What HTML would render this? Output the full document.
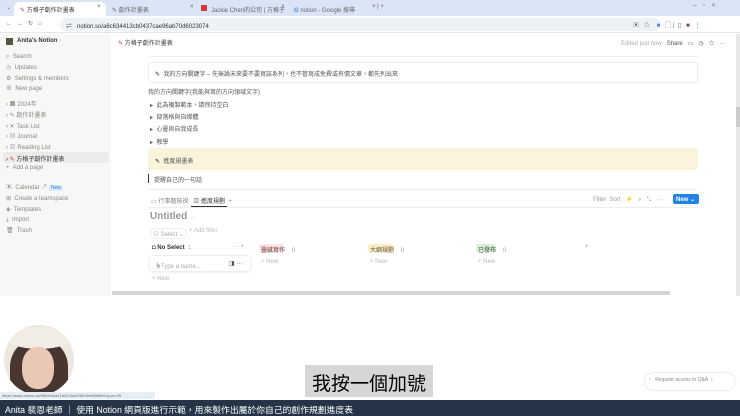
<!DOCTYPE html>
<html><head><meta charset="utf-8"><style>
*{margin:0;padding:0;box-sizing:border-box}
body{width:740px;height:416px;overflow:hidden;background:#fff;font-family:"Liberation Sans","Noto Sans CJK TC",sans-serif;position:relative;color:#37352f}
.a{position:absolute;white-space:nowrap}
.s{font-size:6px;color:#666}
.g{color:#9b9a97}
</style></head><body>
<!-- tab bar -->
<div class="a" style="left:0;top:0;width:740px;height:16px;background:#dae4f5"></div>
<div class="a s" style="left:6px;top:4px">⌄</div>
<div class="a" style="left:14px;top:2px;width:92px;height:14px;background:#fff;border-radius:5px 5px 0 0"></div>
<div class="a s" style="left:20px;top:5px;color:#333"><span style="color:#c33">✎</span> 方格子創作計畫表</div>
<div class="a s" style="left:97px;top:4px">×</div>
<div class="a s" style="left:112px;top:5px">✎ 創作計畫表</div>
<div class="a s" style="left:190px;top:4px">×</div>
<div class="a" style="left:201px;top:5px;width:6px;height:6px;background:#d33;border-radius:1px"></div>
<div class="a s" style="left:211px;top:5px">Jackie Chen的公司 | 方格子</div>
<div class="a s" style="left:281px;top:4px">×</div>
<div class="a s" style="left:294px;top:5px"><b style="color:#4285f4">G</b> notion - Google 搜尋</div>
<div class="a s" style="left:372px;top:4px">× | +</div>
<div class="a s" style="left:693px;top:3px">–&nbsp;&nbsp;&nbsp;&nbsp;▫&nbsp;&nbsp;&nbsp;&nbsp;×</div>
<!-- address bar -->
<div class="a" style="left:0;top:16px;width:740px;height:17px;background:#fff;border-bottom:1px solid #e5e5e5"></div>
<div class="a s" style="left:6px;top:20px">←&nbsp;&nbsp;&nbsp;→&nbsp;&nbsp;&nbsp;↻&nbsp;&nbsp;&nbsp;⌂</div>
<div class="a" style="left:60px;top:18px;width:600px;height:13px;background:#eef1f6;border-radius:7px"></div>
<div class="a s" style="left:66px;top:21px;color:#333">⇌&nbsp;&nbsp; notion.so/a6c634413cb0437cae96ab70d6023074</div>
<div class="a s" style="left:633px;top:20px">▣&nbsp;&nbsp;&nbsp;☆&nbsp;&nbsp;&nbsp;&nbsp;<span style="color:#4285f4">■</span>&nbsp;&nbsp;&nbsp;▢&nbsp;|&nbsp;&nbsp;▯&nbsp;&nbsp;&nbsp;<span style="color:#744">■</span>&nbsp;&nbsp;&nbsp;⋮</div>
<!-- sidebar -->
<div class="a" style="left:0;top:34px;width:111px;height:262px;background:#f7f7f5"></div>
<div class="a" style="left:6px;top:38px;width:7px;height:7px;background:#554"></div>
<div class="a" style="left:17px;top:38px;font-size:6px;color:#333;font-weight:bold">Anita's Notion <span class="g">◦</span></div>
<div class="a s" style="left:6px;top:52px;line-height:10.8px;color:#8a8985">⌕&nbsp; Search<br>◷&nbsp; Updates<br>⚙&nbsp; Settings &amp; members<br>⊕&nbsp; New page</div>
<div class="a s" style="left:6px;top:100px;line-height:10.8px;color:#8a8985">›&nbsp;<b style="color:#443">▦</b> 2024年<br>›&nbsp;✎ 創作計畫表<br>›&nbsp;✕ Task List<br>›&nbsp;▤ Journal<br>›&nbsp;▥ Reading List</div>
<div class="a" style="left:3px;top:152px;width:106px;height:11px;background:#ebebea;border-radius:3px"></div>
<div class="a s" style="left:6px;top:154px;color:#333">›&nbsp;<span style="color:#c33">✎</span> 方格子創作計畫表</div>
<div class="a s" style="left:6px;top:165px;color:#8a8985">+&nbsp; Add a page</div>
<div class="a s" style="left:6px;top:183px;line-height:10.8px;color:#8a8985">▣&nbsp; Calendar ↗ <span style="background:#dbeafe;color:#2383e2;font-size:5px;padding:0 2px">New</span><br>⊞&nbsp; Create a teamspace<br>◈&nbsp; Templates<br>⤓&nbsp; Import<br>🗑&nbsp; Trash</div>
<!-- notion header -->
<div class="a s" style="left:118px;top:38px;color:#333"><span style="color:#c33">✎</span> 方格子創作計畫表</div>
<div class="a s" style="left:621px;top:38px;color:#aaa">Edited just now&nbsp;&nbsp; <span style="color:#555">Share&nbsp;&nbsp; ▭&nbsp;&nbsp; ◷&nbsp;&nbsp; ☆&nbsp;&nbsp; ···</span></div>
<div class="a" style="left:148px;top:56px;width:550px;height:1px;background:#eee"></div>
<!-- content -->
<div class="a" style="left:148px;top:62px;width:550px;height:21px;border:1px solid #eee;border-radius:3px"></div>
<div class="a s" style="left:155px;top:69px;color:#555"><span style="color:#222">✎</span>&nbsp; 我的方向關鍵字 – 先無論未來要不要寫該系列，也不管寫成免費或有價文章，都先列出來</div>
<div class="a s" style="left:148px;top:87px;color:#555">我的方向關鍵字(我能與寫的方向領域文字)</div>
<div class="a s" style="left:150px;top:100px;line-height:12.2px;color:#555">▸&nbsp; 此為複製範本，請保持空白<br>▸&nbsp; 部落格與自媒體<br>▸&nbsp; 心靈與自我成長<br>▸&nbsp; 教學</div>
<div class="a" style="left:148px;top:148px;width:550px;height:22px;background:#fbf3db;border-radius:3px"></div>
<div class="a s" style="left:155px;top:156px;color:#555"><span style="color:#222">✎</span>&nbsp; 進度規畫表</div>
<div class="a" style="left:148px;top:174px;width:1px;height:9px;background:#333"></div>
<div class="a s" style="left:154px;top:175px;color:#555">提醒自己的一句話</div>
<div class="a" style="left:148px;top:189px;width:550px;height:1px;background:#eee"></div>
<div class="a s" style="left:151px;top:196px;color:#888">▭ 行事曆檢視&nbsp;&nbsp; <span style="color:#333">▥ 進度規劃</span>&nbsp; +</div>
<div class="a" style="left:191px;top:206px;width:36px;height:1px;background:#333"></div>
<div class="a" style="left:148px;top:207px;width:550px;height:1px;background:#eee"></div>
<div class="a s" style="left:593px;top:196px;color:#999">Filter&nbsp; Sort&nbsp;&nbsp; <b style="color:#333">⚡</b>&nbsp;&nbsp; ⌕&nbsp;&nbsp; ⤡&nbsp;&nbsp; ···</div>
<div class="a" style="left:673px;top:194px;width:26px;height:10px;background:#2383e2;border-radius:2px;color:#fff;font-size:6px;font-weight:bold;padding:2px 0 0 3px">New ⌄</div>
<div class="a" style="left:150px;top:211px;font-size:10px;font-weight:bold;color:#999">Untitled <span style="font-weight:normal;font-size:6px">···</span></div>
<div class="a s" style="left:150px;top:228px;color:#aaa;border:1px solid #eee;border-radius:6px;padding:0 2px">⊙ Select ⌄</div>
<div class="a s" style="left:189px;top:228px;color:#bbb">+ Add filter</div>
<div class="a s" style="left:152px;top:245px;color:#333;font-weight:bold">◘ No Select <span style="font-weight:normal;color:#bbb">&nbsp;1</span></div>
<div class="a s" style="left:233px;top:244px;color:#aaa">··· +</div>
<div class="a" style="left:150px;top:256px;width:100px;height:15px;border-radius:3px;box-shadow:0 0 0 1px #eee,0 1px 3px rgba(0,0,0,.1)"></div>
<div class="a s" style="left:155px;top:261px;color:#aaa"><span style="color:#333">☝</span>Type a name...</div>
<div class="a s" style="left:229px;top:260px;color:#555">◨ ···</div>
<div class="a s" style="left:152px;top:276px;color:#bbb">+ New</div>
<div class="a" style="left:259px;top:244px;width:25px;height:8px;background:#fbe4e4;border-radius:2px"></div>
<div class="a s" style="left:261px;top:245px;color:#633">靈感寫作 <span class="g">&nbsp;&nbsp;&nbsp;0</span></div>
<div class="a s" style="left:261px;top:259px;color:#bbb">+ New</div>
<div class="a" style="left:368px;top:244px;width:25px;height:8px;background:#fdecc8;border-radius:2px"></div>
<div class="a s" style="left:370px;top:245px;color:#653">大綱規劃 <span class="g">&nbsp;&nbsp;&nbsp;0</span></div>
<div class="a s" style="left:370px;top:259px;color:#bbb">+ New</div>
<div class="a" style="left:476px;top:244px;width:20px;height:8px;background:#dbeddb;border-radius:2px"></div>
<div class="a s" style="left:478px;top:245px;color:#353">已發布 <span class="g">&nbsp;&nbsp;&nbsp;0</span></div>
<div class="a s" style="left:478px;top:259px;color:#bbb">+ New</div>
<div class="a s" style="left:585px;top:244px;color:#999">+</div>
<div class="a" style="left:112px;top:291px;width:558px;height:4px;background:#d5d5d5"></div>
<div class="a" style="left:736px;top:34px;width:4px;height:262px;background:#e8e8e8"></div>
<div class="a" style="left:736px;top:107px;width:4px;height:20px;background:#ccc"></div>
<!-- avatar -->
<div class="a" style="left:4px;top:325px;width:70px;height:70px;border-radius:50%;overflow:hidden;background:#ece7df">
  <div class="a" style="left:6px;top:14px;width:58px;height:62px;border-radius:45% 45% 10% 10%;background:#4a3630"></div>
  <div class="a" style="left:2px;top:2px;width:66px;height:22px;border-radius:50%;background:#f1ece4"></div>
  <div class="a" style="left:18px;top:22px;width:32px;height:42px;border-radius:45%;background:#eac8b6"></div>
</div>
<div class="a" style="left:0;top:392px;width:155px;height:7px;background:#e8eef6;font-size:4px;color:#667;padding:1px 2px">https://www.notion.so/0f5dc94a4184249a2982c9e82bff8e41pvs=25</div>
<div class="a" style="left:305px;top:365px;width:128px;height:32px;background:#d6d6d6"></div>
<div class="a" style="left:312px;top:369px;font-size:19px;color:#000;font-family:'Noto Sans CJK TC',sans-serif">我按一個加號</div>
<div class="a" style="left:645px;top:373px;width:90px;height:17px;border-radius:9px;background:#fff;box-shadow:0 0 2px rgba(0,0,0,.2)"></div>
<div class="a" style="left:648px;top:377px;font-size:5px;color:#888">◔&nbsp;&nbsp; Request access to Q&amp;A&nbsp; ›</div>
<div class="a" style="left:0;top:400px;width:740px;height:16px;background:#253547"></div>
<div class="a" style="left:5px;top:403px;font-size:8.8px;color:#fff">Anita 裴恩老師 ｜ 使用 Notion 網頁版進行示範，用來製作出屬於你自己的創作規劃進度表</div>
</body></html>
